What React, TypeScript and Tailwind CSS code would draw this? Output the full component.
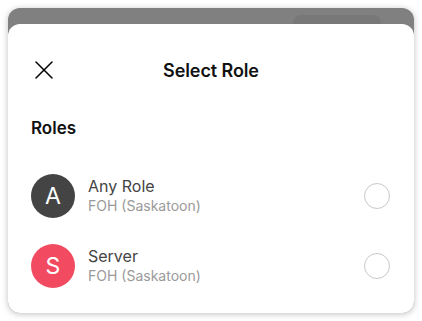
import React from 'react'

interface Role {
  letter: string
  name: string
  location: string
  color: string
}

const roles: Role[] = [
  { letter: 'A', name: 'Any Role', location: 'FOH (Saskatoon)', color: 'bg-[#444444]' },
  { letter: 'S', name: 'Server', location: 'FOH (Saskatoon)', color: 'bg-[#f24b61]' },
]

export default function App() {
  return (
    <div className="w-[422px] h-[321px] bg-white p-2 font-['Inter','Noto_Sans',sans-serif]">
      <div className="flex h-[305px] flex-col overflow-hidden rounded-[12px] bg-[#808080] shadow-[0_1px_6px_rgba(0,0,0,0.25)]">
        {/* sheet behind */}
        <div className="flex h-4 shrink-0 justify-end pr-[33px] pt-[7px]">
          <div className="h-6 w-[88px] rounded-[8px] bg-[#787878]" />
        </div>

        {/* modal sheet */}
        <div className="relative z-10 flex flex-1 flex-col rounded-t-[12px] bg-white pt-6">
          <div className="relative flex h-11 items-center justify-center">
            <button className="absolute left-[27px] top-[13px] text-black">
              <svg width="18" height="18" viewBox="0 0 18 18" fill="none" stroke="currentColor" strokeWidth="1.5" strokeLinecap="round">
                <path d="M1 1L17 17M17 1L1 17" />
              </svg>
            </button>
            <h1 className="text-[18px] font-semibold tracking-[-0.1px] text-[#111]">Select Role</h1>
          </div>

          <h2 className="mt-6 pl-[23px] text-[17px] leading-6 font-semibold text-[#111]">Roles</h2>

          <ul className="mt-[21px] flex flex-col">
            {roles.map((role) => (
              <li key={role.name} className="flex h-[70px] items-center pl-[23px] pr-6">
                <div className={`flex h-11 w-11 items-center justify-center rounded-full ${role.color} text-[23px] text-white`}>
                  {role.letter}
                </div>
                <div className="ml-[13px] flex flex-1 flex-col">
                  <span className="text-[16px] leading-5 text-[#444]">{role.name}</span>
                  <span className="text-[14px] leading-5 text-[#9a9a9a]">{role.location}</span>
                </div>
                <div className="h-[26px] w-[26px] rounded-full border border-[#c8c8c8]" />
              </li>
            ))}
          </ul>
        </div>
      </div>
    </div>
  )
}
